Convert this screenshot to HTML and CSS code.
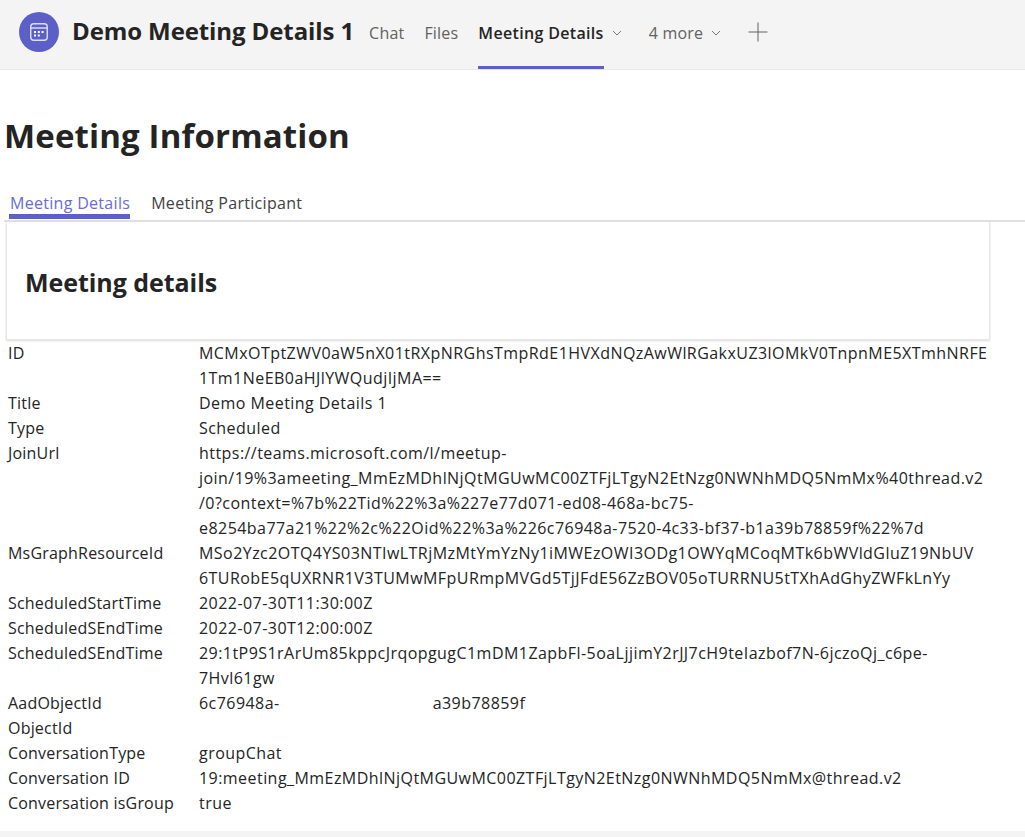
FILE: index.html
```html
<!DOCTYPE html>
<html lang="en">
    <head>
        <meta charset="UTF-8" />
        <title>Demo Meeting Details 1</title>
        <link rel="stylesheet" href="styles.css">
    </head>
    <body>
        <header class="top-bar">
            <div class="avatar">
                <svg width="20" height="20" viewBox="0 0 20 20" fill="none">
                    <rect x="1.75" y="1.75" width="16.5" height="16.5" rx="3" stroke="#fff" stroke-opacity="0.8" stroke-width="1.4"/>
                    <path d="M2 6h16" stroke="#fff" stroke-opacity="0.8" stroke-width="1.4"/>
                    <path d="M5 9h2v2H5zM8.8 9h2v2H8.8zM12.6 9h2v2h-2zM5 12.6h2v2H5zM8.8 12.6h2v2H8.8z" fill="#fff"/>
                </svg>
            </div>
            <h1 class="chat-title">Demo Meeting Details 1</h1>
            <nav class="top-tabs">
                <a class="top-tab"><span class="tab-label">Chat</span></a>
                <a class="top-tab"><span class="tab-label">Files</span></a>
                <a class="top-tab active">
                    <span class="tab-label">Meeting Details</span>
                    <svg class="chevron" width="10" height="6" viewBox="0 0 10 6"><path d="M1 1l4 4 4-4" fill="none" stroke="#777" stroke-width="1"/></svg>
                </a>
                <a class="top-tab">
                    <span class="tab-label">4 more</span>
                    <svg class="chevron" width="10" height="6" viewBox="0 0 10 6"><path d="M1 1l4 4 4-4" fill="none" stroke="#777" stroke-width="1"/></svg>
                </a>
                <svg class="plus" width="20" height="20" viewBox="0 0 20 20"><path d="M10 .5v19M.5 10h19" stroke="#616161" stroke-width="1"/></svg>
            </nav>
        </header>

        <main class="content">
            <h2 class="page-title">Meeting Information</h2>
            <div class="sub-tabs">
                <a class="sub-tab active">Meeting Details</a>
                <a class="sub-tab">Meeting Participant</a>
            </div>
            <section class="card">
                <h3>Meeting details</h3>
            </section>
            <table class="details">
                <tr><td>ID</td><td>MCMxOTptZWV0aW5nX01tRXpNRGhsTmpRdE1HVXdNQzAwWlRGakxUZ3lOMkV0TnpnME5XTmhNRFE<br>1Tm1NeEB0aHJlYWQudjIjMA==</td></tr>
                <tr><td>Title</td><td>Demo Meeting Details 1</td></tr>
                <tr><td>Type</td><td>Scheduled</td></tr>
                <tr><td>JoinUrl</td><td>https://teams.microsoft.com/l/meetup-<br>join/19%3ameeting_MmEzMDhlNjQtMGUwMC00ZTFjLTgyN2EtNzg0NWNhMDQ5NmMx%40thread.v2<br>/0?context=%7b%22Tid%22%3a%227e77d071-ed08-468a-bc75-<br>e8254ba77a21%22%2c%22Oid%22%3a%226c76948a-7520-4c33-bf37-b1a39b78859f%22%7d</td></tr>
                <tr><td>MsGraphResourceId</td><td>MSo2Yzc2OTQ4YS03NTIwLTRjMzMtYmYzNy1iMWEzOWI3ODg1OWYqMCoqMTk6bWVldGluZ19NbUV<br>6TURobE5qUXRNR1V3TUMwMFpURmpMVGd5TjJFdE56ZzBOV05oTURRNU5tTXhAdGhyZWFkLnYy</td></tr>
                <tr><td>ScheduledStartTime</td><td>2022-07-30T11:30:00Z</td></tr>
                <tr><td>ScheduledSEndTime</td><td>2022-07-30T12:00:00Z</td></tr>
                <tr><td>ScheduledSEndTime</td><td>29:1tP9S1rArUm85kppcJrqopgugC1mDM1ZapbFl-5oaLjjimY2rJJ7cH9teIazbof7N-6jczoQj_c6pe-<br>7Hvl61gw</td></tr>
                <tr><td>AadObjectId</td><td>6c76948a-<span class="redacted"></span>a39b78859f</td></tr>
                <tr><td>ObjectId</td><td></td></tr>
                <tr><td>ConversationType</td><td>groupChat</td></tr>
                <tr><td>Conversation ID</td><td>19:meeting_MmEzMDhlNjQtMGUwMC00ZTFjLTgyN2EtNzg0NWNhMDQ5NmMx@thread.v2</td></tr>
                <tr><td>Conversation isGroup</td><td>true</td></tr>
            </table>
        </main>
        <div class="bottom-strip"></div>
    </body>
</html>
```

FILE: styles.css
```css
* {
    box-sizing: border-box;
}
html,
body {
    height: 100%;
}
body {
    display: flex;
    flex-direction: column;
    margin: 0;
    overflow: hidden;
    color: #242424;
    background-color: #fff;
    font-family: "Open Sans", "Noto Sans", sans-serif;
    font-size: 16px;
}

.top-bar {
    display: flex;
    align-items: center;
    height: 70px;
    padding-bottom: 5px;
    padding-left: 19px;
    border-bottom: 1px solid #e8e8e8;
    background-color: #f4f4f4;
}
.avatar {
    display: flex;
    align-items: center;
    justify-content: center;
    width: 40px;
    height: 40px;
    margin-right: 13px;
    border-radius: 50%;
    background-color: #5b5fc7;
}
.chat-title {
    margin: 0 15px 4px 0;
    font-size: 24px;
    font-weight: 700;
    letter-spacing: -0.1px;
    white-space: nowrap;
}
.top-tabs {
    display: flex;
    align-self: stretch;
    align-items: center;
    margin-bottom: -5px;
}
.top-tab {
    display: flex;
    align-items: center;
    height: 69px;
    margin-right: 20px;
    color: #616161;
    font-size: 16px;
    letter-spacing: 0.2px;
    white-space: nowrap;
}
.tab-label {
    display: flex;
    align-items: center;
    align-self: stretch;
    border-bottom: 3px solid transparent;
}
.top-tab .chevron {
    margin-right: 7px;
    margin-bottom: 3px;
}
.top-tab.active {
    color: #242424;
    font-weight: 600;
    letter-spacing: 0.33px;
}
.top-tab.active .tab-label {
    border-bottom-color: #5b5fc7;
}
.chevron {
    margin-left: 8px;
}
.plus {
    margin-bottom: 5px;
}

.content {
    flex: 1;
    padding-top: 43px;
}
.page-title {
    margin: 0 0 30px 4px;
    font-size: 33px;
    font-weight: 700;
    letter-spacing: 0.15px;
    line-height: 46px;
}
.sub-tabs {
    display: flex;
    gap: 20px;
    height: 34px;
    margin-top: -1px;
    margin-left: 4px;
    padding-left: 5px;
    border-bottom: 2px solid #e0e0e0;
}
.sub-tab {
    height: 31px;
    padding-left: 1px;
    color: #424242;
    font-size: 16px;
    letter-spacing: 0.3px;
    line-height: 30px;
}
.sub-tab.active {
    border-bottom: 5px solid #5b5fc7;
    color: #6a6cd0;
}
.card {
    width: 984px;
    height: 118px;
    margin-left: 6px;
    padding: 44px 18px;
    border: 1px solid #e6e6e6;
    border-top: 0;
    background-color: #fff;
    box-shadow: 0 1px 2px rgba(0, 0, 0, 0.15);
}
.card h3 {
    margin: 0;
    font-size: 25px;
    font-weight: 700;
    letter-spacing: -0.05px;
    line-height: 32px;
}

.details {
    margin: 1px 0 0 0;
    border-collapse: collapse;
    font-size: 16px;
    line-height: 25px;
}
.details td {
    padding: 0;
    vertical-align: top;
    white-space: nowrap;
}
.details td:first-child {
    width: 199px;
    padding-left: 8px;
    letter-spacing: 0.2px;
}
.details td:last-child {
    letter-spacing: 0.45px;
}
.redacted {
    display: inline-block;
    width: 153px;
}

.bottom-strip {
    height: 6px;
    background-color: #f4f4f4;
}
```
